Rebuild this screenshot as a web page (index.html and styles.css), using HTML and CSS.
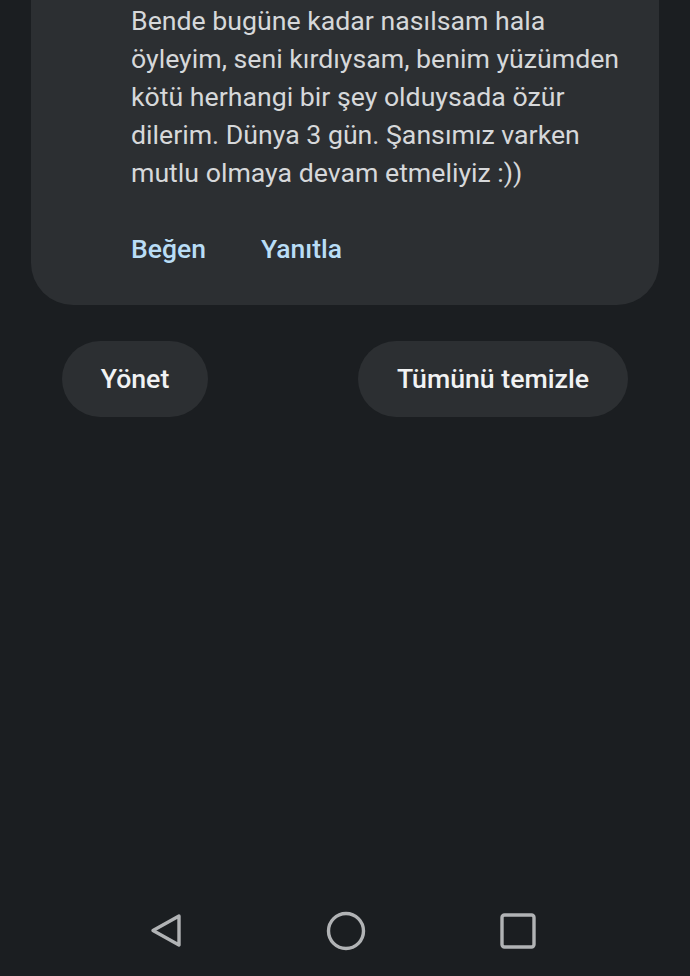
FILE: index.html
```html
<!DOCTYPE html>
<html lang="tr">
<head>
  <meta charset="UTF-8" />
  <meta name="viewport" content="width=device-width, initial-scale=1.0"/>
  <title>Bildirimler</title>
  <link rel="stylesheet" href="styles.css">
</head>
<body>
  <div class="screen">
    <main class="content">
      <div class="card">
        <p class="message">Bende bugüne kadar nasılsam hala öyleyim, seni kırdıysam, benim yüzümden kötü herhangi bir şey olduysada özür dilerim. Dünya 3 gün. Şansımız varken mutlu olmaya devam etmeliyiz :))</p>
        <div class="actions">
          <span class="action">Beğen</span>
          <span class="action">Yanıtla</span>
        </div>
      </div>
      <div class="pills">
        <button class="pill pill-manage">Yönet</button>
        <button class="pill pill-clear">Tümünü temizle</button>
      </div>
    </main>
    <nav class="navbar">
      <svg class="nav-back" width="34" height="36" viewBox="0 0 34 36">
        <path d="M30 3 L4 17.5 L30 32 Z" fill="none" stroke="#b1b3b5" stroke-width="3.4" stroke-linejoin="round"/>
      </svg>
      <svg class="nav-home" width="40" height="40" viewBox="0 0 40 40">
        <circle cx="20" cy="20" r="17.5" fill="none" stroke="#b1b3b5" stroke-width="3.4"/>
      </svg>
      <svg class="nav-recent" width="36" height="36" viewBox="0 0 36 36">
        <rect x="2" y="2" width="32" height="32" rx="2.5" fill="none" stroke="#b1b3b5" stroke-width="3.4"/>
      </svg>
    </nav>
  </div>
</body>
</html>
```

FILE: styles.css
```css
html, body {
  margin: 0;
  height: 100%;
  background: #1b1e21;
  font-family: Roboto, "Noto Sans", sans-serif;
}
.screen {
  display: flex;
  flex-direction: column;
  height: 976px;
}
.content {
  flex: 1;
}
.card {
  margin: 0 31px;
  background: #2c2f32;
  border-radius: 0 0 42px 42px;
  padding: 2px 30px 37px 100px;
}
.message {
  margin: 0;
  color: #d6d8da;
  font-size: 26.7px;
  line-height: 38px;
}
.actions {
  display: flex;
  gap: 55px;
  margin-top: 38px;
  line-height: 38px;
}
.action {
  color: #b9ddf6;
  font-size: 26.5px;
  font-weight: 500;
}
.pills {
  display: flex;
  justify-content: space-between;
  padding: 0 62px;
  margin-top: 36px;
}
.pill {
  height: 76px;
  border: none;
  border-radius: 38px;
  background: #2c2f32;
  color: #f1f2f3;
  font-family: Roboto, "Noto Sans", sans-serif;
  font-size: 26.7px;
  font-weight: 500;
  padding: 0;
}
.pill-manage {
  width: 146px;
}
.pill-clear {
  width: 270px;
}
.navbar {
  height: 90px;
  display: flex;
  align-items: center;
  padding-left: 149px;
}
.nav-home {
  margin-left: 143px;
}
.nav-recent {
  margin-left: 134px;
}
```
